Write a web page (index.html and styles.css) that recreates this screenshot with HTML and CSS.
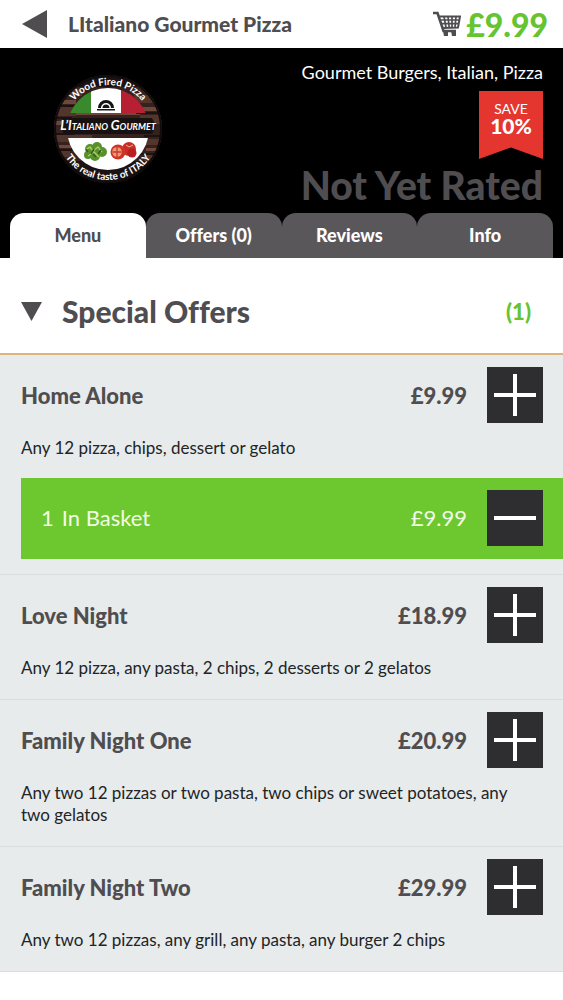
FILE: index.html
```html
<!DOCTYPE html>
<html lang="en">
<head>
<meta charset="utf-8">
<meta name="viewport" content="width=device-width, initial-scale=1">
<title>LItaliano Gourmet Pizza</title>
<link rel="stylesheet" href="styles.css">
</head>
<body>
<header class="topbar">
  <button class="back" type="button" aria-label="Back">
    <svg width="25" height="28" viewBox="0 0 25 28"><path d="M0 14 25 0v28z" fill="#4f4d50"/></svg>
  </button>
  <h1 class="title">LItaliano Gourmet Pizza</h1>
  <a class="cart" href="#basket">
    <svg width="28" height="26" viewBox="0 0 28 26" fill="none" stroke="#4f4d50" aria-hidden="true">
      <path d="M0 2h4.500L10.500 20H23" stroke-width="2.600"/>
      <path d="M5 5.500h22l-2 11-15.500.500" stroke-width="2"/>
      <path d="M6.500 9h19.500M8 12.700h17M11 5.500l2 11M15 5.500l1.200 11M19 5.500v11M23 5.500l-1 11" stroke-width="1.700"/>
      <path d="M10 20h5v5h-4zM18 20h5v5h-4z" fill="#4f4d50" stroke="none"/>
    </svg>
    <span class="total">£9.99</span>
  </a>
</header>

<section class="hero">
  <div class="hero-main">
    <svg class="logo" width="112" height="112" viewBox="0 0 112 112" role="img" aria-label="L'Italiano Gourmet">
      <defs>
        <clipPath id="disc"><circle cx="56" cy="56" r="54"/></clipPath>
        <clipPath id="inner"><circle cx="56" cy="56" r="41"/></clipPath>
        <path id="arc-top" d="M12 56a44 44 0 0 1 88 0"/>
        <path id="arc-bottom" d="M5 56a51 51 0 0 0 102 0"/>
      </defs>
      <g clip-path="url(#disc)">
        <path fill="#35221e" d="M0 0h112v112H0z"/>
        <path fill="#54352c" d="M0 16h30v7H0zM82 22h30v8H82zM0 34h24v9H0zM88 42h24v9H88zM0 62h40v7H0zM70 66h42v6H70zM0 78h18v6H0zM92 82h20v6H92z"/>
        <path fill="#70483b" d="M4 27h20v4H4zM90 34h20v4H90zM0 48h22v4H0zM2 72h18v3H2zM94 75h14v3H94zM24 38h64v4H24z"/>
        <path fill="#1b1213" d="M0 32h26v2H0zM84 39h28v2H84zM0 44h20v2H0zM0 60h22v2H0zM92 62h20v2H92zM0 76h20v2H0zM88 80h24v2H88zM0 88h112v24H0zM20 0h72v14H20z"/>
      </g>
      <circle cx="56" cy="56" r="53" fill="none" stroke="#100c0c" stroke-width="2"/>
      <g clip-path="url(#inner)">
        <path fill="#398a2c" d="M12 10h27v30H12z"/>
        <path fill="#fff" d="M39 10h30v30H39zM12 65h90v36H12z"/>
        <path fill="#b71f32" d="M69 10h30v30H69z"/>
      </g>
      <path fill="#141414" d="M46 35a8 8 0 0 1 16 0h-3a5 5 0 0 0-10 0zM50.500 35a3.500 3.500 0 0 1 7 0zM45 36h18v1.500H45z"/>
      <path d="M12 45h88l4 8-4 8H12l-4-8z" fill="#171112"/>
      <text x="56" y="57" class="logo-name">L’Italiano Gourmet</text>
      <text class="logo-ring"><textPath href="#arc-top" startOffset="50%" text-anchor="middle">Wood Fired Pizza</textPath></text>
      <text class="logo-ring"><textPath href="#arc-bottom" startOffset="50%" text-anchor="middle">The real taste of ITALY</textPath></text>
      <g fill="#58912c"><circle cx="38" cy="76" r="5"/><circle cx="45" cy="74" r="5"/><circle cx="50" cy="79" r="5"/><circle cx="43" cy="83" r="5"/><circle cx="36" cy="82" r="4"/></g>
      <path d="M33 77l5-3 3 4 5-4 4 5M36 83l6-4 5 5" fill="none" stroke="#a4ca62" stroke-width="1.500"/>
      <path d="M39 81l3-5M46 81l3-4M36 79l-2-3M44 84l-3-3" stroke="#315f1b" stroke-width="1.500"/>
      <circle cx="77" cy="76" r="7" fill="#c72e25"/>
      <circle cx="66" cy="79" r="7.500" fill="#ce3528"/>
      <circle cx="65" cy="79" r="4.800" fill="#ee9a76"/>
      <path d="M65 74v10M60.500 79h9" stroke="#c9392b" stroke-width="1.300"/>
      <circle cx="80" cy="80" r="4.500" fill="#b91f20"/>
      <path d="M74 72l3 2 4-2" stroke="#f0b197" fill="none"/>
    </svg>
    <div class="summary">
      <p class="cuisines">Gourmet Burgers, Italian, Pizza</p>
      <p class="ribbon"><span>SAVE</span><strong>10%</strong></p>
      <p class="rating">Not Yet Rated</p>
    </div>
  </div>
  <nav class="tabs">
    <a class="tab active" href="#menu" aria-current="page">Menu</a>
    <a class="tab" href="#offers">Offers (0)</a>
    <a class="tab" href="#reviews">Reviews</a>
    <a class="tab" href="#info">Info</a>
  </nav>
</section>

<main id="menu">
  <h2 class="section-heading">
    <button class="section-toggle" type="button" aria-expanded="true">
      <svg width="21" height="19" viewBox="0 0 21 19" aria-hidden="true"><path d="M0 0h21L10.500 19z" fill="#4f4d50"/></svg>
      <span class="section-name">Special Offers</span>
      <span class="count">(1)</span>
    </button>
  </h2>
  <ul class="items">
    <li class="item">
      <div class="row">
        <h3 class="name">Home Alone</h3>
        <span class="price">£9.99</span>
        <button class="step" type="button" aria-label="Add Home Alone"><svg width="42" height="42" viewBox="0 0 42 42"><path d="M0 21h42M21 0v42"/></svg></button>
      </div>
      <p class="desc">Any 12 pizza, chips, dessert or gelato</p>
      <div class="basket" id="basket">
        <span class="quantity">1</span>
        <span class="basket-label">In Basket</span>
        <span class="basket-price">£9.99</span>
        <button class="step" type="button" aria-label="Remove Home Alone"><svg width="42" height="42" viewBox="0 0 42 42"><path d="M0 21h42"/></svg></button>
      </div>
    </li>
    <li class="item">
      <div class="row">
        <h3 class="name">Love Night</h3>
        <span class="price">£18.99</span>
        <button class="step" type="button" aria-label="Add Love Night"><svg width="42" height="42" viewBox="0 0 42 42"><path d="M0 21h42M21 0v42"/></svg></button>
      </div>
      <p class="desc">Any 12 pizza, any pasta, 2 chips, 2 desserts or 2 gelatos</p>
    </li>
    <li class="item">
      <div class="row">
        <h3 class="name">Family Night One</h3>
        <span class="price">£20.99</span>
        <button class="step" type="button" aria-label="Add Family Night One"><svg width="42" height="42" viewBox="0 0 42 42"><path d="M0 21h42M21 0v42"/></svg></button>
      </div>
      <p class="desc">Any two 12 pizzas or two pasta, two chips or sweet potatoes, any two gelatos</p>
    </li>
    <li class="item">
      <div class="row">
        <h3 class="name">Family Night Two</h3>
        <span class="price">£29.99</span>
        <button class="step" type="button" aria-label="Add Family Night Two"><svg width="42" height="42" viewBox="0 0 42 42"><path d="M0 21h42M21 0v42"/></svg></button>
      </div>
      <p class="desc">Any two 12 pizzas, any grill, any pasta, any burger 2 chips</p>
    </li>
  </ul>
</main>
</body>
</html>
```
FILE: styles.css
```css
* {
  box-sizing: border-box;
}

body {
  margin: 0;
  background: #fff;
  color: #4f4d50;
  font-family: Lato, sans-serif;
  font-variant-ligatures: none;
}

h1, h2, h3, p, ul {
  margin: 0;
  padding: 0;
}

button {
  padding: 0;
  border: 0;
  background: none;
  color: inherit;
  font: inherit;
  font-variant-ligatures: none;
  cursor: pointer;
}

a {
  color: inherit;
  text-decoration: none;
}

svg {
  display: block;
  flex: none;
}

.topbar {
  display: flex;
  align-items: center;
  height: 48px;
  padding: 0 15px 0 22px;
}

.title {
  flex: 1;
  padding-left: 21px;
  font-size: 21px;
  font-weight: 900;
  line-height: 28px;
}

.cart {
  display: flex;
  align-items: center;
  gap: 5px;
}

.total {
  padding-top: 2px;
  color: #66c430;
  font-size: 32px;
  font-weight: 900;
  line-height: 36px;
}

.hero {
  background: #000;
}

.hero-main {
  display: flex;
  justify-content: space-between;
  align-items: flex-start;
  padding: 13px 20px 0 52px;
}

.logo {
  margin-top: 12px;
}

.logo-name {
  fill: #fff;
  font-size: 13px;
  font-style: italic;
  font-weight: 700;
  font-variant: small-caps;
  text-anchor: middle;
}

.logo-ring {
  fill: #fff;
  font-size: 10px;
  font-weight: 700;
}

.summary {
  display: flex;
  flex-direction: column;
  align-items: flex-end;
}

.cuisines {
  color: #fff;
  font-size: 18px;
  line-height: 22px;
}

.ribbon {
  display: flex;
  flex-direction: column;
  align-items: center;
  width: 64px;
  height: 68px;
  margin-top: 8px;
  padding-top: 9px;
  background: #e5352f;
  clip-path: polygon(0 0, 100% 0, 100% 100%, 50% 83%, 0 100%);
  color: #fff;
  font-size: 14px;
  line-height: 17px;
}

.ribbon strong {
  font-size: 21px;
  font-weight: 900;
  line-height: 18px;
}

.rating {
  margin-top: 3px;
  color: #4f4d50;
  font-size: 39px;
  font-weight: 900;
  line-height: 46px;
}

.tabs {
  display: flex;
  margin-top: 5px;
  padding: 0 10px;
}

.tab {
  flex: 1;
  padding: 11px 0 12px;
  border-radius: 14px 14px 0 0;
  background: #5a575b;
  color: #fff;
  font-size: 18px;
  font-weight: 900;
  line-height: 22px;
  text-align: center;
}

.tab.active {
  background: #fff;
  color: #4f4d50;
}

.section-heading {
  border-bottom: 2px solid #e0b27c;
}

.section-toggle {
  display: flex;
  align-items: center;
  width: 100%;
  padding: 35px 32px 24px 21px;
  text-align: left;
}

.section-name {
  flex: 1;
  padding-left: 20px;
  font-size: 30px;
  font-weight: 900;
  line-height: 36px;
}

.count {
  color: #66c430;
  font-size: 22px;
  font-weight: 900;
}

.items {
  list-style: none;
}

.item {
  padding: 12px 0 20px 21px;
  border-bottom: 1px solid #d9dddd;
  background: #e7ebeb;
}

.row {
  display: flex;
  align-items: center;
  gap: 20px;
  padding-right: 20px;
}

.name,
.price {
  padding-top: 2px;
  font-size: 22px;
  font-weight: 900;
  line-height: 28px;
}

.name {
  flex: 1;
}

.step {
  display: flex;
  align-items: center;
  justify-content: center;
  width: 56px;
  height: 56px;
  background: #2e2d2f;
}

.step path {
  fill: none;
  stroke: #fff;
  stroke-width: 4;
}

.desc {
  margin-top: 14px;
  padding-right: 40px;
  color: #222426;
  font-size: 17px;
  line-height: 22px;
}

.basket {
  display: flex;
  align-items: center;
  gap: 8px;
  margin: 19px 0 -5px;
  padding: 12px 20px 13px;
  background: #6dc72f;
  color: #f3fbe6;
  font-size: 22px;
  line-height: 28px;
}

.basket-label {
  flex: 1;
}

.basket-price {
  margin-right: 12px;
}
```
